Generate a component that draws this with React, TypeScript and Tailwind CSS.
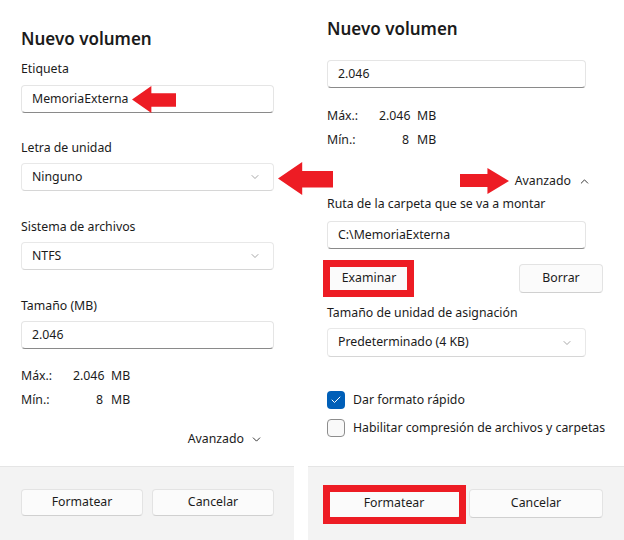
import { ChevronDown, ChevronUp, Check } from 'lucide-react';

const font = { fontFamily: '"Noto Sans", "Open Sans", sans-serif' };

function TextBox({ value, className = '' }: { value: string; className?: string }) {
  return (
    <div
      className={`h-[28px] flex items-center px-[10px] bg-white rounded-[4px] border border-[#e5e5e5] border-b-[#8a8a8a] text-[12.3px] text-[#1b1b1b] ${className}`}
    >
      {value}
    </div>
  );
}

function ComboBox({ value, className = '' }: { value: string; className?: string }) {
  return (
    <div
      className={`h-[28px] flex items-center justify-between pl-[10px] pr-[12px] bg-white rounded-[4px] border border-[#e8e8e8] border-b-[#d6d6d6] text-[12.3px] text-[#1b1b1b] ${className}`}
    >
      <span>{value}</span>
      <ChevronDown size={12} strokeWidth={1.5} className="text-[#8a8a8a]" />
    </div>
  );
}

function Button({ label, className = '' }: { label: string; className?: string }) {
  return (
    <div
      className={`h-[27px] flex items-center justify-center bg-[#fbfbfb] rounded-[4px] border border-[#e3e3e3] border-b-[#d0d0d0] text-[12.3px] text-[#1b1b1b] ${className}`}
    >
      {label}
    </div>
  );
}

function Label({ text, className = '' }: { text: string; className?: string }) {
  return <div className={`text-[12.3px] leading-[18px] text-[#1b1b1b] ${className}`}>{text}</div>;
}

function SizeInfo() {
  return (
    <div className="text-[12.3px] leading-[24px] text-[#1b1b1b]">
      <div className="flex">
        <span className="w-[52px]">Máx.:</span>
        <span className="w-[30px] text-right">2.046</span>
        <span className="ml-[8px]">MB</span>
      </div>
      <div className="flex">
        <span className="w-[52px]">Mín.:</span>
        <span className="w-[30px] text-right">8</span>
        <span className="ml-[8px]">MB</span>
      </div>
    </div>
  );
}

function RedArrow({ dir, className }: { dir: 'left' | 'right'; className: string }) {
  return (
    <svg viewBox="0 0 50 26" preserveAspectRatio="none" className={`absolute ${className}`}>
      {dir === 'left' ? (
        <polygon points="0,13 22,0 22,7 50,7 50,20 22,20 22,26" fill="#ed1c24" />
      ) : (
        <polygon points="50,13 28,0 28,6 0,6 0,19 28,19 28,26" fill="#ed1c24" />
      )}
    </svg>
  );
}

export default function App() {
  return (
    <div className="relative w-[624px] h-[540px] flex bg-white overflow-hidden" style={font}>
      {/* Left dialog */}
      <div className="w-[294px] flex flex-col">
        <div className="flex-1 pl-[21px]">
          <div className="pt-[27px] text-[17px] leading-[24px] font-semibold text-[#1b1b1b]">
            Nuevo volumen
          </div>
          <Label text="Etiqueta" className="mt-[9px]" />
          <TextBox value="MemoriaExterna" className="mt-[7px] w-[253px]" />
          <Label text="Letra de unidad" className="mt-[26px]" />
          <ComboBox value="Ninguno" className="mt-[6px] w-[253px]" />
          <Label text="Sistema de archivos" className="mt-[27px]" />
          <ComboBox value="NTFS" className="mt-[6px] w-[253px]" />
          <Label text="Tamaño (MB)" className="mt-[27px]" />
          <TextBox value="2.046" className="mt-[6px] w-[253px]" />
          <div className="mt-[15px]">
            <SizeInfo />
          </div>
          <div className="mt-[15px] w-[242px] flex justify-end items-center gap-[6px] text-[12.3px] leading-[24px] text-[#1b1b1b]">
            Avanzado
            <ChevronDown size={13} strokeWidth={1.6} />
          </div>
        </div>
        <div className="h-[74px] bg-[#f3f3f3] border-t border-[#e5e5e5] pt-[22px] pl-[21px] flex gap-[9px]">
          <Button label="Formatear" className="w-[122px]" />
          <Button label="Cancelar" className="w-[122px]" />
        </div>
      </div>

      <div className="w-[14px]" />

      {/* Right dialog, scrolled down with advanced options open */}
      <div className="w-[316px] flex flex-col">
        <div className="flex-1 pl-[19px]">
          <div className="pt-[17px] text-[17px] leading-[24px] font-semibold text-[#1b1b1b]">
            Nuevo volumen
          </div>
          <TextBox value="2.046" className="mt-[19px] w-[259px]" />
          <div className="mt-[16px]">
            <SizeInfo />
          </div>
          <div className="mt-[17px] w-[264px] flex justify-end items-center gap-[7px] text-[12.3px] leading-[24px] text-[#1b1b1b]">
            Avanzado
            <ChevronUp size={13} strokeWidth={1.6} />
          </div>
          <Label text="Ruta de la carpeta que se va a montar" className="mt-[2px]" />
          <TextBox value="C:\MemoriaExterna" className="mt-[8px] w-[259px]" />
          <div className="mt-[15px] w-[276px] flex justify-between">
            <Button label="Examinar" className="w-[84px] h-[29px]" />
            <Button label="Borrar" className="w-[84px] h-[29px]" />
          </div>
          <Label text="Tamaño de unidad de asignación" className="mt-[11px]" />
          <ComboBox value="Predeterminado (4 KB)" className="mt-[6px] w-[259px] h-[29px]" />
          <div className="mt-[29px] flex flex-col">
            <div className="h-[28px] flex items-center gap-[8px] text-[12.3px] text-[#1b1b1b]">
              <div className="w-[18px] h-[18px] rounded-[4px] bg-[#005fb8] flex items-center justify-center">
                <Check size={12} strokeWidth={2} className="text-white" />
              </div>
              Dar formato rápido
            </div>
            <div className="h-[28px] flex items-center gap-[8px] text-[12.3px] text-[#1b1b1b]">
              <div className="w-[18px] h-[18px] rounded-[4px] border border-[#8d8d8d] bg-[#f9f9f9]" />
              Habilitar compresión de archivos y carpetas
            </div>
          </div>
        </div>
        <div className="h-[74px] bg-[#f3f3f3] border-t border-[#e5e5e5] pt-[22px] pl-[19px] flex gap-[8px]">
          <Button label="Formatear" className="w-[134px] h-[29px]" />
          <Button label="Cancelar" className="w-[134px] h-[29px]" />
        </div>
      </div>

      {/* Annotations */}
      <RedArrow dir="left" className="left-[132px] top-[86px] w-[44px] h-[27px]" />
      <RedArrow dir="left" className="left-[278px] top-[162px] w-[55px] h-[33px]" />
      <RedArrow dir="right" className="left-[460px] top-[168px] w-[49px] h-[26px]" />
      <div className="absolute left-[323px] top-[260px] w-[91px] h-[37px] border-[7px] border-[#ed1c24]" />
      <div className="absolute left-[323px] top-[485px] w-[143px] h-[39px] border-[7px] border-[#ed1c24]" />
    </div>
  );
}
